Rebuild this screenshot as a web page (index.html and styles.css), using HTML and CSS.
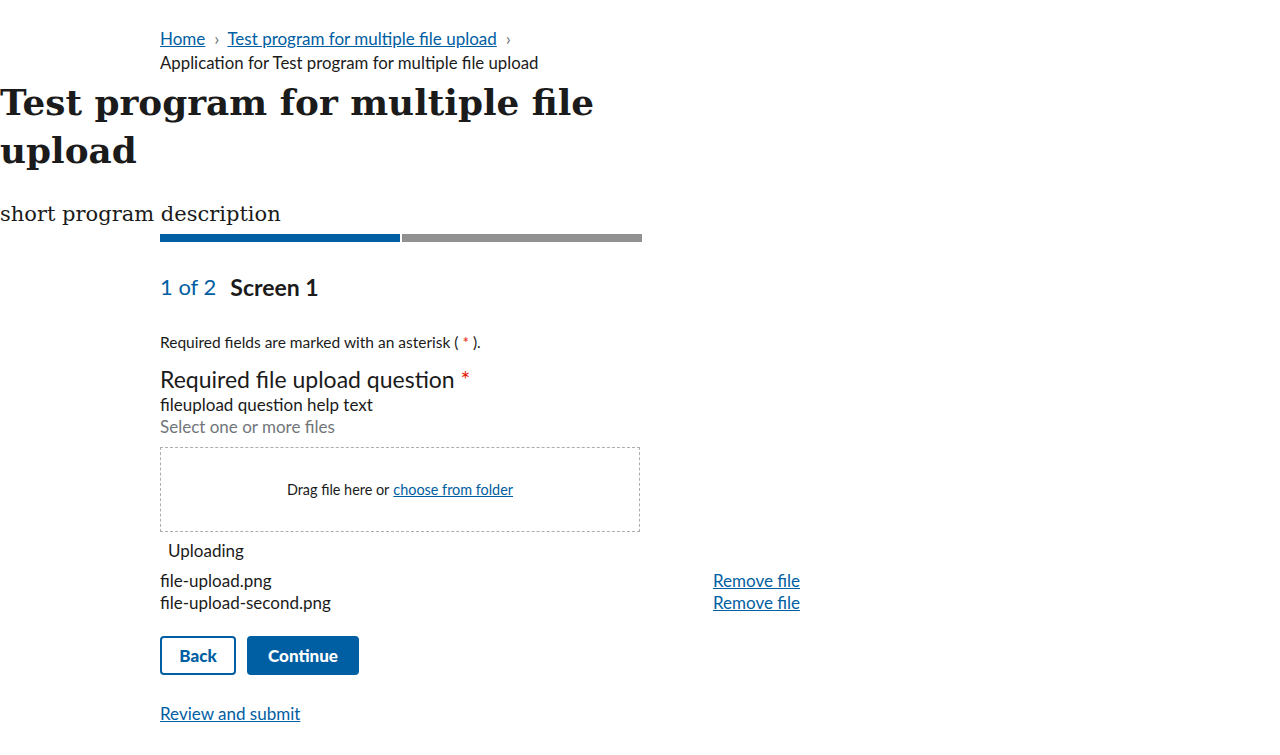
FILE: index.html
```html
<!DOCTYPE html>
<html lang="en">
<head>
<meta charset="utf-8">
<title>Application for Test program for multiple file upload</title>
<link rel="stylesheet" href="styles.css">
</head>
<body>
<nav class="breadcrumb">
  <a href="#" class="crumb-link">Home</a><span class="sep">›</span><a href="#" class="crumb-link">Test program for multiple file upload</a><span class="sep">›</span>
  <div class="crumb-current">Application for Test program for multiple file upload</div>
</nav>
<h1 class="title">Test program for multiple file upload</h1>
<p class="desc">short program description</p>
<main class="content">
  <div class="progress">
    <div class="seg seg-done"></div>
    <div class="seg seg-todo"></div>
  </div>
  <h2 class="step"><span class="step-count">1 of 2</span><span class="step-name">Screen 1</span></h2>
  <p class="required-note">Required fields are marked with an asterisk ( <span class="ast">*</span> ).</p>
  <div class="question">
    <div class="q-label">Required file upload question <span class="ast">*</span></div>
    <div class="q-help">fileupload question help text</div>
    <div class="q-hint">Select one or more files</div>
    <div class="dropzone">Drag file here or <a href="#" class="choose">choose from folder</a></div>
    <div class="uploading">Uploading</div>
    <ul class="files">
      <li class="file-row"><span>file-upload.png</span><a href="#" class="remove">Remove file</a></li>
      <li class="file-row"><span>file-upload-second.png</span><a href="#" class="remove">Remove file</a></li>
    </ul>
  </div>
  <div class="actions">
    <button class="btn btn-outline">Back</button>
    <button class="btn btn-primary">Continue</button>
  </div>
  <a href="#" class="review">Review and submit</a>
</main>
</body>
</html>
```
FILE: styles.css
```css
html, body {
  margin: 0;
  padding: 0;
  background: #fff;
  color: #1b1b1b;
  font-family: "Lato", "Noto Sans", sans-serif;
}
a { color: #005ea2; }

.breadcrumb {
  margin-left: 160px;
  padding-top: 26px;
  font-size: 17px;
  line-height: 24px;
}
.crumb-link { color: #005ea2; text-decoration: underline; }
.sep {
  display: inline-block;
  color: #71767a;
  margin: 0 8px 0 9px;
  font-size: 18px;
}
.crumb-current { font-size: 16.8px; }

.title {
  font-family: "DejaVu Serif", "Liberation Serif", serif;
  font-weight: bold;
  font-size: 35.8px;
  line-height: 48px;
  margin: 3px 0 0 0;
  width: 640px;
}
.desc {
  font-family: "DejaVu Serif", "Liberation Serif", serif;
  font-size: 21px;
  line-height: 30px;
  margin: 25px 0 0 0;
}

.content {
  margin-left: 160px;
  width: 640px;
}
.progress {
  display: flex;
  gap: 2px;
  width: 482px;
  margin-top: 5px;
}
.seg { flex: 1; height: 8px; }
.seg-done { background: #005ea2; }
.seg-todo { background: #919191; }

.step {
  margin: 29px 0 0 0;
  font-size: 23px;
  line-height: 32px;
  display: flex;
  gap: 14px;
}
.step-count { color: #005ea2; font-weight: normal; font-size: 22px; }
.step-name { font-weight: bold; }

.required-note {
  margin: 27px 0 0 0;
  font-size: 15.5px;
  line-height: 24px;
}
.ast { color: #e52207; }

.question { margin-top: 10px; }
.q-label { font-size: 23px; line-height: 30px; }
.q-help { font-size: 17px; line-height: 22px; }
.q-hint { font-size: 17px; line-height: 22px; color: #71767a; }
.dropzone {
  margin-top: 9px;
  width: 480px;
  height: 85px;
  box-sizing: border-box;
  border: 1px dashed #a9aeb1;
  display: flex;
  align-items: center;
  justify-content: center;
  font-size: 14.4px;
}
.dropzone .choose { margin-left: 4px; }
.uploading {
  margin-top: 8px;
  padding-left: 8px;
  font-size: 17px;
  line-height: 22px;
}
.files {
  list-style: none;
  margin: 8px 0 0 0;
  padding: 0;
}
.file-row {
  display: flex;
  justify-content: space-between;
  font-size: 17px;
  line-height: 22px;
}
.remove { text-decoration: underline; }

.actions {
  display: flex;
  gap: 11px;
  margin-top: 22px;
}
.btn {
  font-family: inherit;
  font-weight: 900;
  font-size: 17px;
  height: 39px;
  border-radius: 4px;
  cursor: pointer;
}
.btn-outline {
  background: #fff;
  color: #005ea2;
  border: 2px solid #005ea2;
  width: 76px;
  padding: 0;
}
.btn-primary {
  background: #005ea2;
  color: #fff;
  border: none;
  width: 112px;
  padding: 0;
}
.review {
  display: inline-block;
  margin-top: 27px;
  font-size: 17px;
  line-height: 24px;
}
```
